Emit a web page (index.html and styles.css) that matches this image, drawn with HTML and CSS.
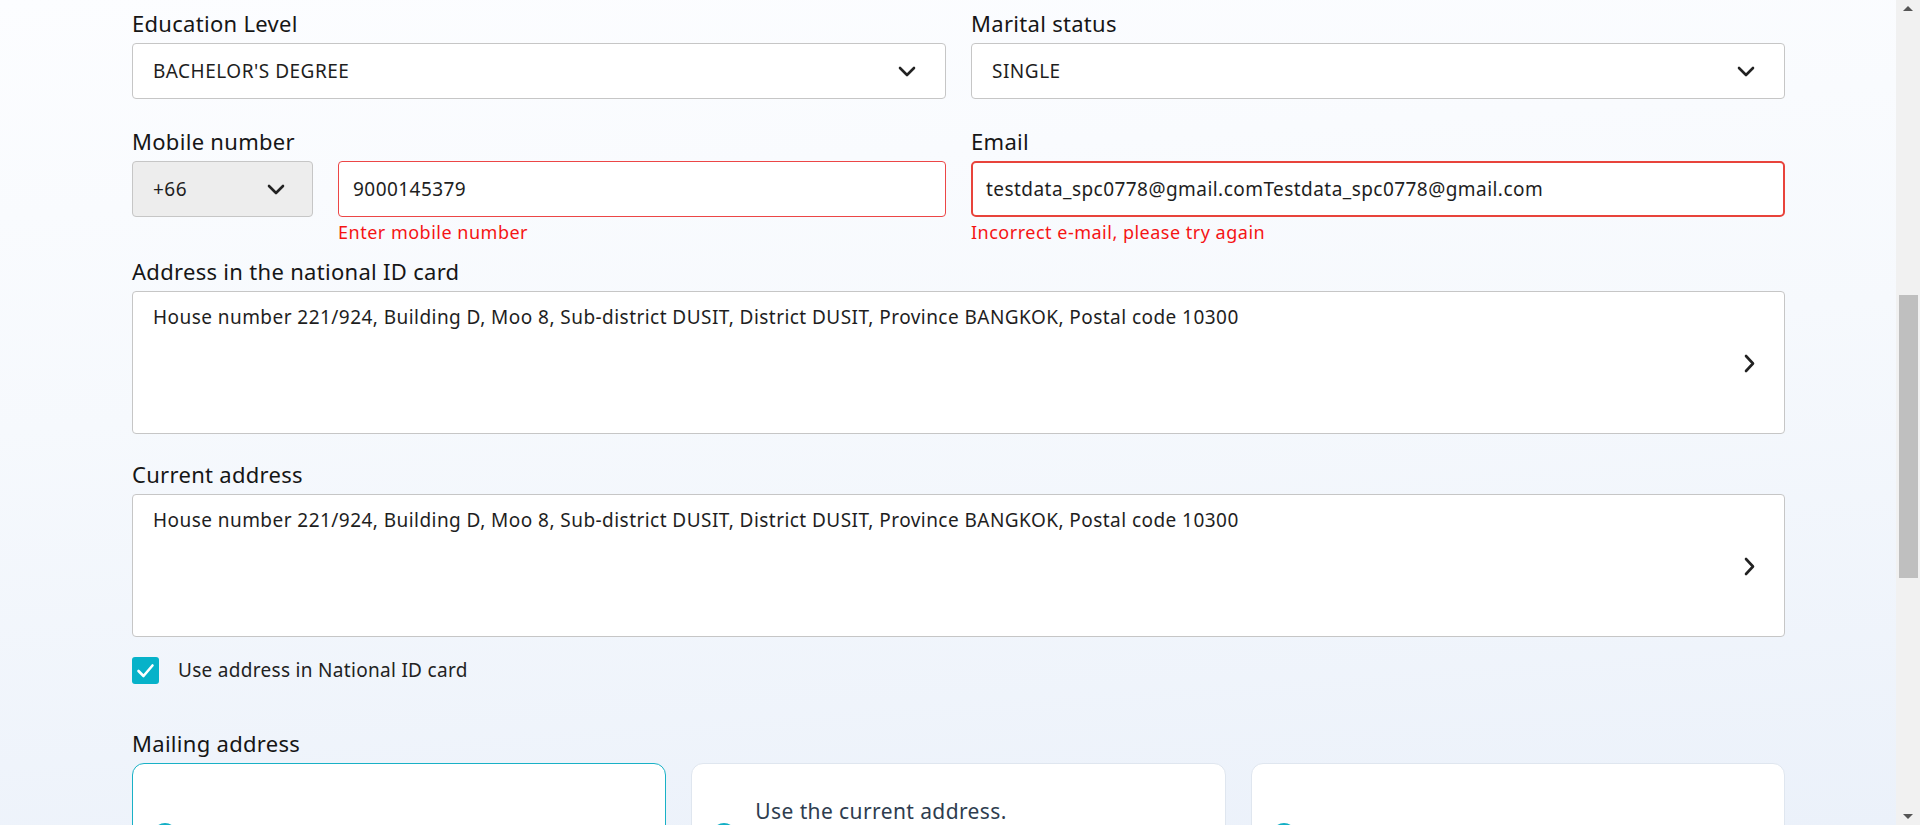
FILE: index.html
```html
<!DOCTYPE html>
<html lang="en">
<head>
<meta charset="utf-8">
<title>Personal information</title>
<link rel="stylesheet" href="styles.css">
</head>
<body>
<div class="page">
  <div class="row two r1">
    <div class="field">
      <div class="label">Education Level</div>
      <div class="select">
        <span>BACHELOR'S DEGREE</span>
        <svg class="chev-down" width="18" height="11" viewBox="0 0 18 11"><polyline points="2,2 9,9 16,2"/></svg>
      </div>
    </div>
    <div class="field">
      <div class="label">Marital status</div>
      <div class="select">
        <span>SINGLE</span>
        <svg class="chev-down" width="18" height="11" viewBox="0 0 18 11"><polyline points="2,2 9,9 16,2"/></svg>
      </div>
    </div>
  </div>

  <div class="row two r2">
    <div class="field">
      <div class="label">Mobile number</div>
      <div class="phone">
        <div class="select code">
          <span>+66</span>
          <svg class="chev-down" width="18" height="11" viewBox="0 0 18 11"><polyline points="2,2 9,9 16,2"/></svg>
        </div>
        <div class="phone-main">
          <div class="input err-thin">9000145379</div>
          <div class="err">Enter mobile number</div>
        </div>
      </div>
    </div>
    <div class="field">
      <div class="label">Email</div>
      <div class="input err-thick">testdata_spc0778@gmail.comTestdata_spc0778@gmail.com</div>
      <div class="err">Incorrect e-mail, please try again</div>
    </div>
  </div>

  <div class="field r3">
    <div class="label">Address in the national ID card</div>
    <div class="address">
      <div class="addr-text">House number 221/924, Building D, Moo 8, Sub-district DUSIT, District DUSIT, Province BANGKOK, Postal code 10300</div>
      <svg class="chev-right" width="11" height="19" viewBox="0 0 11 19"><polyline points="2,2 9,9.5 2,17"/></svg>
    </div>
  </div>

  <div class="field r4">
    <div class="label">Current address</div>
    <div class="address">
      <div class="addr-text">House number 221/924, Building D, Moo 8, Sub-district DUSIT, District DUSIT, Province BANGKOK, Postal code 10300</div>
      <svg class="chev-right" width="11" height="19" viewBox="0 0 11 19"><polyline points="2,2 9,9.5 2,17"/></svg>
    </div>
  </div>

  <div class="check-row">
    <span class="checkbox">
      <svg width="27" height="27" viewBox="0 0 27 27"><polyline points="6.5,14 11.5,19 20.5,8.5"/></svg>
    </span>
    <span class="check-label">Use address in National ID card</span>
  </div>

  <div class="label">Mailing address</div>
  <div class="cards">
    <div class="card selected">
      <span class="radio"></span>
      <div class="card-text">
        <div class="card-title">Use the address in National ID card.</div>
      </div>
    </div>
    <div class="card">
      <span class="radio"></span>
      <div class="card-text">
        <div class="card-title">Use the current address.</div>
        <div class="card-desc">House number 221/924, Building D, Moo 8, Sub-district DUSIT, District DUSIT</div>
      </div>
    </div>
    <div class="card">
      <span class="radio"></span>
      <div class="card-text">
        <div class="card-title">Use another address.</div>
      </div>
    </div>
  </div>
</div>

<div class="scrollbar">
  <span class="arrow up"></span>
  <span class="thumb"></span>
  <span class="arrow down"></span>
</div>
</body>
</html>
```

FILE: styles.css
```css
html, body {
  margin: 0;
  padding: 0;
  height: 825px;
  overflow: hidden;
}

body {
  font-family: "Noto Sans", "Open Sans", "DejaVu Sans", sans-serif;
  color: #1b1b1b;
  background: linear-gradient(176deg, #fcfdff 0%, #f6f9fd 45%, #ebf1fa 100%);
}

.page {
  width: 1653px;
  padding: 8px 0 0 132px;
}

.row.two {
  display: grid;
  grid-template-columns: 1fr 1fr;
  column-gap: 25px;
}

.r1 { margin-bottom: 27px; }
.r2 { margin-bottom: 12px; }
.r3 { margin-bottom: 25px; }
.r4 { margin-bottom: 20px; }

.label {
  font-size: 22px;
  line-height: 30px;
  letter-spacing: 0.3px;
  margin-bottom: 5px;
  color: #161616;
}

.select {
  box-sizing: border-box;
  height: 56px;
  background: #fff;
  border: 1px solid #c6c6c6;
  border-radius: 4px;
  display: flex;
  align-items: center;
  justify-content: space-between;
  padding: 0 29px 0 20px;
  font-size: 19px;
  letter-spacing: 0.5px;
  color: #1e1e1e;
}

.chev-down polyline,
.chev-right polyline {
  fill: none;
  stroke: #222;
  stroke-width: 2.6;
  stroke-linecap: round;
  stroke-linejoin: round;
}

.phone {
  display: flex;
  gap: 25px;
}

.select.code {
  width: 181px;
  flex: none;
  background: #ededed;
  padding: 0 27px 0 20px;
}

.phone-main {
  flex: 1;
  min-width: 0;
}

.input {
  box-sizing: border-box;
  height: 56px;
  background: #fff;
  display: flex;
  align-items: center;
  font-size: 19px;
  letter-spacing: 0.45px;
  color: #1e1e1e;
  white-space: nowrap;
  overflow: hidden;
}

.input.err-thin {
  border: 1px solid #ec4646;
  border-radius: 4px;
  padding: 0 14px;
}

.input.err-thick {
  border: 2px solid #e8433b;
  border-radius: 5px;
  padding: 0 13px;
}

.err {
  margin-top: 4px;
  font-size: 18px;
  line-height: 23px;
  letter-spacing: 0.5px;
  color: #f51414;
}

.address {
  box-sizing: border-box;
  height: 143px;
  background: #fff;
  border: 1px solid #c6c6c6;
  border-radius: 4px;
  display: flex;
  align-items: flex-start;
  padding: 13px 29px 0 20px;
  font-size: 19px;
  line-height: 24px;
  letter-spacing: 0.45px;
  color: #1e1e1e;
}

.addr-text { flex: 1; }

.chev-right {
  align-self: center;
  flex: none;
  margin-top: -12px;
}

.check-row {
  display: flex;
  align-items: center;
  height: 27px;
  margin-bottom: 44px;
}

.checkbox {
  width: 27px;
  height: 27px;
  border-radius: 3px;
  background: #06b2c9;
  flex: none;
  display: flex;
}

.checkbox polyline {
  fill: none;
  stroke: #fff;
  stroke-width: 2.6;
  stroke-linecap: round;
  stroke-linejoin: round;
}

.check-label {
  margin-left: 19px;
  font-size: 19px;
  line-height: 27px;
  letter-spacing: 0.3px;
  color: #222;
}

.cards {
  margin-top: 1px;
  display: grid;
  grid-template-columns: repeat(3, 1fr);
  column-gap: 25px;
}

.card {
  background: #fff;
  border: 1px solid #dfe6ef;
  border-radius: 12px;
  display: flex;
  align-items: center;
  gap: 19px;
  padding: 32px 30px 32px 20px;
}

.card.selected {
  border-color: #19b1c6;
}

.radio {
  width: 24px;
  height: 24px;
  box-sizing: border-box;
  border: 2px solid #12afc5;
  border-radius: 50%;
  flex: none;
}

.card.selected .radio {
  border-width: 7px;
}

.card-text { flex: 1; }

.card-title {
  font-size: 21px;
  line-height: 30px;
  letter-spacing: 0.4px;
  color: #2e3d4f;
}

.card-desc {
  font-size: 17px;
  line-height: 24px;
  color: #5a6675;
}

.scrollbar {
  position: fixed;
  top: 0;
  right: 0;
  width: 24px;
  height: 825px;
  background: #f1f1f1;
}

.thumb {
  position: absolute;
  left: 3px;
  right: 2px;
  top: 295px;
  height: 283px;
  background: #bfbfbf;
}

.arrow {
  position: absolute;
  left: 7px;
  width: 0;
  height: 0;
  border-left: 5px solid transparent;
  border-right: 5px solid transparent;
}

.arrow.up {
  top: 6px;
  border-bottom: 5px solid #555;
}

.arrow.down {
  bottom: 6px;
  border-top: 5px solid #555;
}
```
